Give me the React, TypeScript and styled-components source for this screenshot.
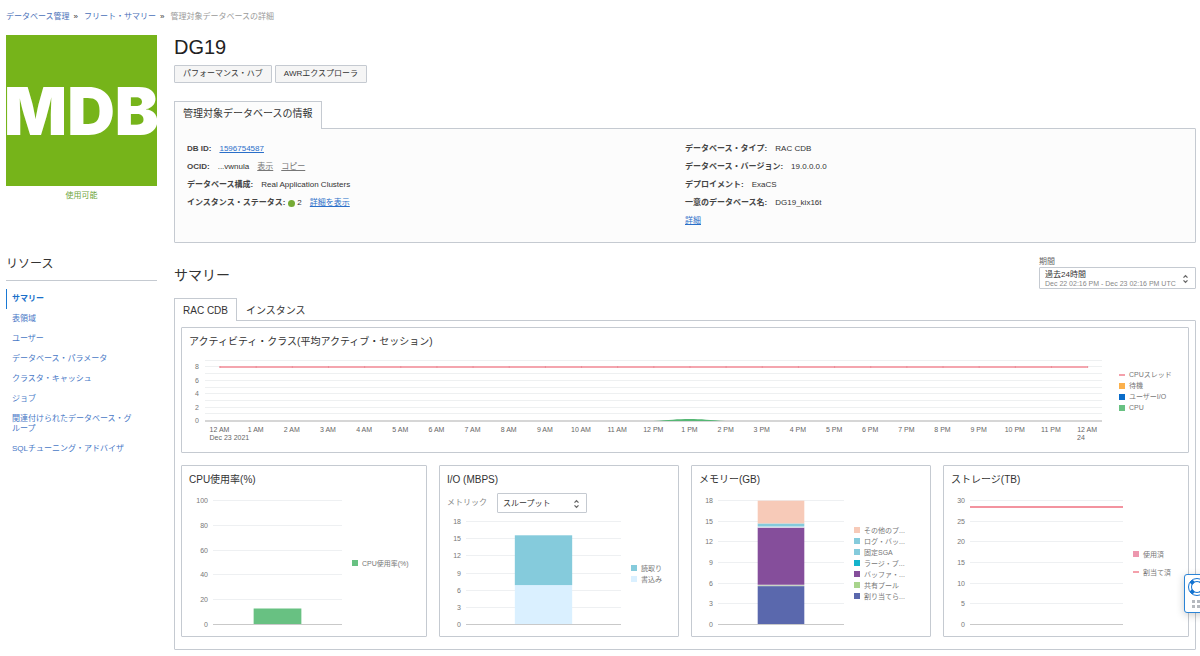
import React from "react";
import styled, { createGlobalStyle } from "styled-components";

const GlobalStyle = createGlobalStyle`
  *, *::before, *::after { box-sizing: border-box; }
  body {
    margin: 0;
    background: #fff;
    color: #333;
    font-family: "Liberation Sans", "Noto Sans CJK JP", sans-serif;
    font-size: 8px;
    line-height: 10px;
    overflow-x: hidden;
  }
  h1, h2, h3, p, ul, ol, dl, dd { margin: 0; padding: 0; font-weight: 400; }
  ul, ol { list-style: none; }
  button, select { font-family: inherit; color: inherit; }
`;

const line = "#c5cad1";
const link = "#2a6fc9";

const Page = styled.div`
  padding: 12px 4px 6px 6px;
`;

const Crumbs = styled.ol`
  display: flex;
  gap: 6px;
  height: 23px;
  color: #9a9a9a;
  a { color: #4a70b8; text-decoration: none; }
  span { color: #333; margin-left: 4px; }
`;

const Columns = styled.div`
  display: grid;
  grid-template-columns: 151px minmax(0, 1fr);
  column-gap: 17px;
`;

const Logo = styled.div`
  display: flex;
  align-items: center;
  justify-content: center;
  height: 151px;
  overflow: hidden;
  background: #76b41a;
  color: #fff;
  font: 900 66px/64px Inter, "Open Sans", sans-serif;
`;

const State = styled.p`
  margin-top: 5px;
  text-align: center;
  color: #6ea53c;
`;

const SideTitle = styled.h2`
  margin-top: 55px;
  padding-bottom: 8px;
  border-bottom: 1px solid ${line};
  font-size: 12px;
  line-height: 16px;
`;

const SideList = styled.ul`
  margin-top: 8px;
`;

const SideLink = styled.a<{ $active?: boolean }>`
  display: block;
  padding: 5px 20px 5px 5px;
  border-left: 1px solid ${(p) => (p.$active ? "#1a79d4" : "transparent")};
  color: ${(p) => (p.$active ? "#1a6fc9" : "#4878c6")};
  font-weight: ${(p) => (p.$active ? 700 : 400)};
  text-decoration: none;
`;

const Title = styled.h1`
  font-size: 20px;
  line-height: 24px;
  color: #222;
`;

const Actions = styled.div`
  display: flex;
  gap: 3px;
  margin: 6px 0 18px;
`;

const Button = styled.button`
  height: 18px;
  padding: 0 8px;
  border: 1px solid ${line};
  border-radius: 1px;
  background: #f5f5f5;
  font-size: 8px;
  line-height: 10px;
`;

const Tabs = styled.div`
  display: flex;
`;

const Tab = styled.button<{ $active?: boolean; $tall?: boolean }>`
  position: relative;
  height: ${(p) => (p.$tall ? 28 : 23)}px;
  margin-bottom: -1px;
  padding: ${(p) => (p.$tall ? "0 8px 4px" : "1px 8px 0")};
  border: 1px solid ${(p) => (p.$active ? line : "transparent")};
  border-bottom: 0;
  background: ${(p) => (p.$tall ? "#fcfcfc" : p.$active ? "#fff" : "transparent")};
  font-size: 10px;
  line-height: 12px;
  z-index: ${(p) => (p.$active ? 1 : 0)};
`;

const InfoPanel = styled.section`
  display: grid;
  grid-template-columns: 1fr 1fr;
  min-height: 115px;
  padding: 11px 12px;
  border: 1px solid ${line};
  border-radius: 0 1px 1px 1px;
  background: #fcfcfc;
`;

const Facts = styled.dl`
  div { display: flex; height: 18px; align-items: center; }
  dt { font-weight: 700; margin-right: 8px; color: #444; white-space: nowrap; }
  dd { display: flex; align-items: center; gap: 8px; white-space: nowrap; }
`;

const TextLink = styled.a<{ $muted?: boolean }>`
  color: ${(p) => (p.$muted ? "#777" : link)};
  text-decoration: underline;
`;

const Dot = styled.i`
  width: 7px;
  height: 7px;
  margin: 0 -6px 0 -5px;
  border-radius: 50%;
  background: #76ab35;
`;

const SummaryHead = styled.header`
  display: flex;
  justify-content: space-between;
  align-items: flex-end;
  margin: 13px 0 9px;
  h2 { font-size: 14px; line-height: 20px; padding-bottom: 4px; }
`;

const Field = styled.div`
  width: 157px;
  label { display: block; color: #666; line-height: 11px; }
`;

const Picker = styled.div<{ $width?: number }>`
  display: flex;
  align-items: center;
  justify-content: space-between;
  width: ${(p) => (p.$width ? p.$width + "px" : "100%")};
  padding: 1px 6px 0 5px;
  border: 1px solid ${line};
  border-radius: 1px;
  background: #fff;
`;

const PickerText = styled.div`
  display: flex;
  flex-direction: column;
  small { font-size: 7px; line-height: 8px; color: #888; white-space: nowrap; }
`;

const Select = styled.select<{ $height: number }>`
  appearance: none;
  height: ${(p) => p.$height}px;
  padding: 0;
  border: 0;
  background: transparent;
  font-size: 8px;
`;

const SummaryPanel = styled.section`
  display: flex;
  flex-direction: column;
  gap: 12px;
  padding: 6px;
  padding-bottom: 12px;
  border: 1px solid ${line};
  border-radius: 0 1px 1px 1px;
`;

const Card = styled.article<{ $height: number }>`
  min-width: 0;
  min-height: ${(p) => p.$height}px;
  padding: 8px 7px 0;
  border: 1px solid ${line};
  border-radius: 1px;
  h3 { font-size: 10px; line-height: 12px; }
`;

const CardGrid = styled.div`
  display: grid;
  grid-template-columns: minmax(0, 246fr) minmax(0, 240fr) minmax(0, 240fr) minmax(0, 246fr);
  gap: 12px;
`;

const Metric = styled.div`
  display: flex;
  align-items: center;
  gap: 10px;
  margin-top: 7px;
  label { color: #888; }
`;

const ChartRow = styled.div<{ $top: number }>`
  display: flex;
  margin-top: ${(p) => p.$top}px;
`;

const Scale = styled.svg<{ $width: number }>`
  flex: none;
  width: ${(p) => p.$width}px;
  overflow: visible;
  font-size: 7px;
  fill: #777;
`;

const Plot = styled.svg`
  flex: 1;
  width: 0;
  min-width: 0;
  overflow: visible;
  font-size: 7px;
  fill: #666;
`;

const Legend = styled.ul<{ $width: number; $inset: number; $gap?: number }>`
  flex: none;
  display: flex;
  flex-direction: column;
  justify-content: center;
  gap: ${(p) => p.$gap ?? 0}px;
  width: ${(p) => p.$width}px;
  padding-left: ${(p) => p.$inset}px;
  font-size: 7px;
  line-height: 11px;
  color: #777;
  white-space: nowrap;
  li { display: flex; align-items: center; gap: 4px; }
`;

const Swatch = styled.i<{ $color: string; $line?: boolean }>`
  width: 6px;
  height: ${(p) => (p.$line ? 2 : 6)}px;
  background: ${(p) => p.$color};
`;

const HelpWidget = styled.button`
  position: fixed;
  right: -10px;
  top: 574px;
  display: flex;
  width: 26px;
  height: 39px;
  padding: 0;
  border: 1px solid #2b84d6;
  border-radius: 3px;
  background: #fff;
  box-shadow: 0 2px 8px rgba(0, 0, 0, 0.2);
`;

const Chevrons = () => (
  <svg width="7" height="10" viewBox="0 0 7 10" fill="none" stroke="#666" strokeWidth="1.2" aria-hidden="true">
    <path d="M1.500 3.600 3.500 1.700 5.500 3.600M1.500 6.400 3.500 8.300 5.500 6.400" />
  </svg>
);

type LegendItem = { label: string; color: string; line?: boolean };

type LegendListProps = { items: LegendItem[]; width: number; inset: number; gap?: number };

const LegendList = ({ items, width, inset, gap }: LegendListProps) => (
  <Legend $width={width} $inset={inset} $gap={gap}>
    {items.map((item) => (
      <li key={item.label}>
        <Swatch $color={item.color} $line={item.line} />
        {item.label}
      </li>
    ))}
  </Legend>
);

type Segment = { from: number; to: number; color: string };

type BarChartProps = {
  name: string;
  max: number;
  step: number;
  height: number;
  top: number;
  scaleWidth: number;
  segments?: Segment[];
  limit?: number;
  legend: LegendItem[];
  legendWidth: number;
  legendGap?: number;
};

const BarChart = (props: BarChartProps) => {
  const { name, max, step, height, top, scaleWidth, segments = [], limit, legend, legendWidth, legendGap } = props;
  const ticks = Array.from({ length: max / step + 1 }, (_, i) => i * step);
  const y = (value: number) => height - (value / max) * height;
  return (
    <ChartRow $top={top}>
      <Scale $width={scaleWidth} height={height + 2} aria-hidden="true">
        {ticks.map((t) => (
          <text key={t} x={scaleWidth - 5} y={y(t) + 3} textAnchor="end">{t}</text>
        ))}
      </Scale>
      <Plot height={height + 2} role="img" aria-label={name}>
        {ticks.slice(1).map((t) => (
          <rect key={t} x="0" width="100%" y={Math.round(y(t))} height="1" fill="#eef0f2" />
        ))}
        <rect x="0" y={height} width="100%" height="1" fill="#c9c9c9" />
        {segments.map((s) => (
          <rect key={s.from} x="31.5%" width="37%" y={y(s.to)} height={y(s.from) - y(s.to)} fill={s.color} />
        ))}
        {limit !== undefined && <rect x="0" width="100%" y={Math.round(y(limit)) - 1} height="2" fill="#f3939f" />}
      </Plot>
      <LegendList items={legend} width={legendWidth} inset={10} gap={legendGap} />
    </ChartRow>
  );
};

const hours = Array.from({ length: 25 }, (_, h) => `${h % 12 || 12} ${h % 24 < 12 ? "AM" : "PM"}`);

const activityLegend: LegendItem[] = [
  { label: "CPUスレッド", color: "#f4a0ab", line: true },
  { label: "待機", color: "#fbb04c" },
  { label: "ユーザーI/O", color: "#0a6cc9" },
  { label: "CPU", color: "#68c182" },
];

const LegendColumn = styled.div`
  display: flex;
  align-items: flex-start;
  margin-top: 8px;
`;

const ActivityChart = () => {
  const y = (value: number) => 60 - value * 6.7;
  const x = (hour: number) => 1.62 + hour * 4.03;
  return (
    <ChartRow $top={13}>
      <Scale $width={16} height={80} aria-hidden="true">
        {[0, 2, 4, 6, 8].map((t) => (
          <text key={t} x={10} y={y(t) + 2} textAnchor="end">{t}</text>
        ))}
      </Scale>
      <Plot height={80} role="img" aria-label="平均アクティブ・セッション">
        {[1, 2, 3, 4, 5, 6, 7, 8, 9].map((t) => (
          <rect key={t} x="0" y={Math.round(y(t)) - 1} width="100%" height="1" fill="#eef0f1" />
        ))}
        <rect x="0" y="59" width="100%" height="2" fill="#d6d6d6" />
        <rect x={`${x(0)}%`} y="5" width="96.7%" height="2" fill="#f4a5ae" />
        {hours.map((_, h) => (
          <rect key={h} x={`${x(h)}%`} y="5" width="1" height="2" fill="#ea8d99" />
        ))}
        <svg x={`${x(12)}%`} y="57" width="8.06%" height="3" viewBox="0 0 72 3" preserveAspectRatio="none">
          <path d="M0 3C16 2 24 1 36 1S56 2 72 3Z" fill="#55b774" />
        </svg>
        {hours.map((label, h) => (
          <text key={h} x={`${x(h)}%`} y="71" textAnchor="middle">{label}</text>
        ))}
        <text x={`${x(0)}%`} y="79" dx="-10">Dec 23 2021</text>
        <text x={`${x(24)}%`} y="79" dx="-10">24</text>
      </Plot>
      <LegendColumn>
        <LegendList items={activityLegend} width={79} inset={17} />
      </LegendColumn>
    </ChartRow>
  );
};

const memoryLegend: LegendItem[] = [
  { label: "その他のプ...", color: "#f7cab8" },
  { label: "ログ・バッ...", color: "#85cbdc" },
  { label: "固定SGA", color: "#85cbdc" },
  { label: "ラージ・プ...", color: "#14b4cc" },
  { label: "バッファ・...", color: "#854e9b" },
  { label: "共有プール", color: "#a8d48c" },
  { label: "割り当てら...", color: "#5a68ad" },
];

const resources = [
  "サマリー",
  "表領域",
  "ユーザー",
  "データベース・パラメータ",
  "クラスタ・キャッシュ",
  "ジョブ",
  "関連付けられたデータベース・グループ",
  "SQLチューニング・アドバイザ",
];

export default function App() {
  return (
    <Page>
      <GlobalStyle />
      <nav aria-label="パンくず">
        <Crumbs>
          <li><a href="#dbm">データベース管理</a><span>»</span></li>
          <li><a href="#fleet">フリート・サマリー</a><span>»</span></li>
          <li>管理対象データベースの詳細</li>
        </Crumbs>
      </nav>
      <Columns>
        <aside>
          <Logo>MDB</Logo>
          <State>使用可能</State>
          <SideTitle>リソース</SideTitle>
          <SideList>
            {resources.map((name, i) => (
              <li key={name}><SideLink href={`#r${i}`} $active={i === 0}>{name}</SideLink></li>
            ))}
          </SideList>
        </aside>
        <main>
          <Title>DG19</Title>
          <Actions>
            <Button type="button">パフォーマンス・ハブ</Button>
            <Button type="button">AWRエクスプローラ</Button>
          </Actions>
          <Tabs role="tablist">
            <Tab type="button" role="tab" aria-selected $active $tall>管理対象データベースの情報</Tab>
          </Tabs>
          <InfoPanel>
            <Facts>
              <div><dt>DB ID:</dt><dd><TextLink href="#id">1596754587</TextLink></dd></div>
              <div>
                <dt>OCID:</dt>
                <dd>...vwnula <TextLink $muted href="#show">表示</TextLink><TextLink $muted href="#copy">コピー</TextLink></dd>
              </div>
              <div><dt>データベース構成:</dt><dd>Real Application Clusters</dd></div>
              <div><dt>インスタンス・ステータス:</dt><dd><Dot />2 <TextLink href="#status">詳細を表示</TextLink></dd></div>
            </Facts>
            <Facts>
              <div><dt>データベース・タイプ:</dt><dd>RAC CDB</dd></div>
              <div><dt>データベース・バージョン:</dt><dd>19.0.0.0.0</dd></div>
              <div><dt>デプロイメント:</dt><dd>ExaCS</dd></div>
              <div><dt>一意のデータベース名:</dt><dd>DG19_kix16t</dd></div>
              <div><dd><TextLink href="#more">詳細</TextLink></dd></div>
            </Facts>
          </InfoPanel>

          <SummaryHead>
            <h2>サマリー</h2>
            <Field>
              <label htmlFor="period">期間</label>
              <Picker>
                <PickerText>
                  <Select id="period" $height={11}><option>過去24時間</option></Select>
                  <small>Dec 22 02:16 PM - Dec 23 02:16 PM UTC</small>
                </PickerText>
                <Chevrons />
              </Picker>
            </Field>
          </SummaryHead>

          <Tabs role="tablist">
            <Tab type="button" role="tab" aria-selected $active>RAC CDB</Tab>
            <Tab type="button" role="tab" aria-selected={false}>インスタンス</Tab>
          </Tabs>
          <SummaryPanel>
            <Card $height={126}>
              <h3>アクティビティ・クラス(平均アクティブ・セッション)</h3>
              <ActivityChart />
            </Card>
            <CardGrid>
              <Card $height={172}>
                <h3>CPU使用率(%)</h3>
                <BarChart
                  name="CPU使用率"
                  max={100}
                  step={20}
                  height={124}
                  top={14}
                  scaleWidth={24}
                  segments={[{ from: 0, to: 12.5, color: "#68c182" }]}
                  legend={[{ label: "CPU使用率(%)", color: "#68c182" }]}
                  legendWidth={77}
                />
              </Card>
              <Card $height={172}>
                <h3>I/O (MBPS)</h3>
                <Metric>
                  <label htmlFor="metric">メトリック</label>
                  <Picker $width={90}>
                    <Select id="metric" $height={17}><option>スループット</option></Select>
                    <Chevrons />
                  </Picker>
                </Metric>
                <BarChart
                  name="I/O"
                  max={18}
                  step={3}
                  height={103}
                  top={8}
                  scaleWidth={19}
                  segments={[
                    { from: 0, to: 6.8, color: "#daf0ff" },
                    { from: 6.8, to: 15.5, color: "#85cbdc" },
                  ]}
                  legend={[
                    { label: "読取り", color: "#85cbdc" },
                    { label: "書込み", color: "#daf0ff" },
                  ]}
                  legendWidth={50}
                />
              </Card>
              <Card $height={172}>
                <h3>メモリー(GB)</h3>
                <BarChart
                  name="メモリー"
                  max={18}
                  step={3}
                  height={124}
                  top={14}
                  scaleWidth={19}
                  segments={[
                    { from: 0, to: 5.5, color: "#5a68ad" },
                    { from: 5.5, to: 5.7, color: "#c9d6c4" },
                    { from: 5.7, to: 14, color: "#854e9b" },
                    { from: 14, to: 14.15, color: "#e6eef2" },
                    { from: 14.15, to: 14.6, color: "#85cbdc" },
                    { from: 14.6, to: 17.9, color: "#f7cab8" },
                  ]}
                  legend={memoryLegend}
                  legendWidth={79}
                />
              </Card>
              <Card $height={172}>
                <h3>ストレージ(TB)</h3>
                <BarChart
                  name="ストレージ"
                  max={30}
                  step={5}
                  height={124}
                  top={14}
                  scaleWidth={19}
                  limit={28.3}
                  legend={[
                    { label: "使用済", color: "#ed97ae" },
                    { label: "割当て済", color: "#f4a0ab", line: true },
                  ]}
                  legendWidth={58}
                  legendGap={7}
                />
              </Card>
            </CardGrid>
          </SummaryPanel>
        </main>
      </Columns>
      <HelpWidget type="button" aria-label="ヘルプ">
        <svg width="24" height="37" viewBox="0 0 24 37" aria-hidden="true">
          <circle cx="12" cy="12" r="8.500" fill="none" stroke="#1373d1" />
          <circle cx="12" cy="12" r="5.500" fill="none" stroke="#1373d1" />
          <path d="M6 6 8.500 8.500M18 6 15.500 8.500M6 18 8.500 15.500M18 18 15.500 15.500" stroke="#1373d1" strokeWidth="4" />
          <g fill="#b5b9be">
            <path d="M7 25h3v3H7zM12 25h3v3h-3zM17 25h3v3h-3zM7 30h3v3H7zM12 30h3v3h-3zM17 30h3v3h-3z" />
          </g>
        </svg>
      </HelpWidget>
    </Page>
  );
}
